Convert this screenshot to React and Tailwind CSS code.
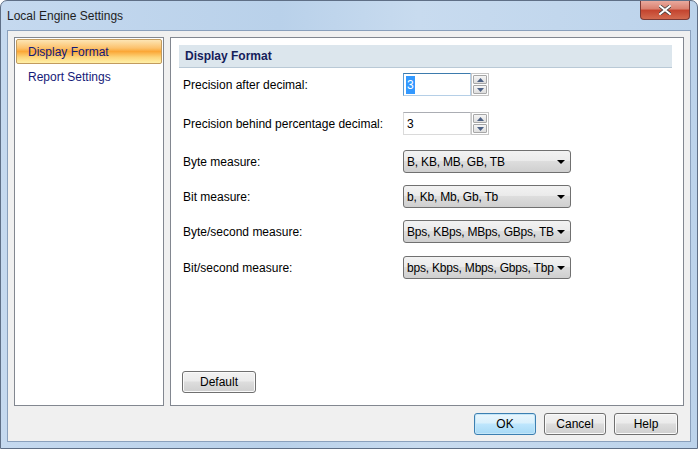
import React from "react";

const font = { fontFamily: '"Liberation Sans", Arial, sans-serif' };

function SpinBox({ value, focused }) {
  return (
    <div className="flex h-[23px] w-[86px]">
      <div
        className={`flex h-full w-[68px] items-center border bg-white pl-[2px] text-[12px] ${
          focused
            ? "border-t-[#3d7bad] border-l-[#5c9bd1] border-b-[#b5cfe7] border-r-[#b5cfe7]"
            : "border-[#dadada] border-t-[#abadb3]"
        }`}
      >
        {focused ? (
          <span className="bg-[#3399ff] px-[1px] text-white">{value}</span>
        ) : (
          <span className="px-[1px] text-black">{value}</span>
        )}
      </div>
      <div className="flex h-full w-[18px] flex-col gap-[1px] border border-[#c6c6c6] bg-white p-[1px]">
        <div className="flex flex-1 items-center justify-center rounded-[1px] border border-[#a7a7a7] bg-gradient-to-b from-[#f5f5f5] to-[#dedede]">
          <svg width="7" height="4" viewBox="0 0 7 4">
            <path d="M0 4 L3.5 0 L7 4 Z" fill="#4d6185" />
          </svg>
        </div>
        <div className="flex flex-1 items-center justify-center rounded-[1px] border border-[#a7a7a7] bg-gradient-to-b from-[#f5f5f5] to-[#dedede]">
          <svg width="7" height="4" viewBox="0 0 7 4">
            <path d="M0 0 L7 0 L3.5 4 Z" fill="#4d6185" />
          </svg>
        </div>
      </div>
    </div>
  );
}

function Dropdown({ value }) {
  return (
    <div className="relative flex h-[23px] w-[168px] items-center rounded-[3px] border border-[#707070] bg-[linear-gradient(#f2f2f2_0%,#ebebeb_45%,#dddddd_50%,#cfcfcf_100%)] pl-[3px] text-[12px] text-black">
      <span className="w-[147px] overflow-hidden whitespace-nowrap tracking-[-0.2px]">{value}</span>
      <svg className="absolute right-[5px] top-[9px]" width="8" height="4" viewBox="0 0 8 4">
        <path d="M0 0 L8 0 L4 4 Z" fill="#000" />
      </svg>
    </div>
  );
}

function Button({ children, focused, w = "w-[62px]" }) {
  return (
    <div
      className={`flex h-[22px] ${w} items-center justify-center rounded-[3px] border text-[12px] text-black ${
        focused
          ? "border-[#3c7fb1] bg-[linear-gradient(#eaf6fd_0%,#d9f0fc_45%,#bee6fd_50%,#a7d9f5_100%)] shadow-[inset_0_0_0_1px_#c4e6f8]"
          : "border-[#707070] bg-[linear-gradient(#f2f2f2_0%,#ebebeb_45%,#dddddd_50%,#cfcfcf_100%)] shadow-[inset_0_0_0_1px_#fafafa]"
      }`}
    >
      {children}
    </div>
  );
}

function Row({ label, children, className }) {
  return (
    <div className={`flex items-center ${className}`}>
      <div className="w-[224px] pl-[4px] text-[12px] text-black">{label}</div>
      {children}
    </div>
  );
}

export default function App() {
  return (
    <div style={font} className="h-[449px] w-[698px] bg-white">
      <div className="flex h-[449px] w-[698px] flex-col overflow-hidden rounded-t-[7px] border border-[#5f6f86] bg-[linear-gradient(90deg,#c5d9ef_0%,#b9d1ea_40%,#c8dbef_60%,#bcd3eb_100%)]">
        {/* title bar */}
        <div className="relative flex h-[29px] shrink-0 items-center pl-[6px] text-[12px] text-[#1e1e1e]">
          <span className="mt-[1px]">Local Engine Settings</span>
          <div className="absolute right-[7px] top-0 flex h-[19px] w-[50px] items-center justify-center rounded-b-[4px] border border-t-0 border-[#7a3a36] bg-[linear-gradient(#e9a99d_0%,#d9806f_45%,#c4432e_50%,#d26a4f_100%)]">
            <svg width="12" height="10" viewBox="0 0 12 10">
              <path d="M1 1 L11 9 M11 1 L1 9" stroke="#3c3c3c" strokeWidth="3.4" strokeLinecap="square" />
              <path d="M1 1 L11 9 M11 1 L1 9" stroke="#ffffff" strokeWidth="2" strokeLinecap="square" />
            </svg>
          </div>
        </div>
        {/* client area */}
        <div className="mx-[6px] mb-[6px] flex flex-1 flex-col border border-[#8aa0bc] bg-[#f0f0f0] px-[6px] pt-[6px]">
          <div className="flex h-[369px] gap-[6px]">
            {/* nav */}
            <div className="flex w-[150px] flex-col border border-[#828790] bg-white p-[1px]">
              <div className="flex h-[25px] items-center rounded-[2px] border border-[#c29b5e] bg-[linear-gradient(#fde5b4_0%,#fcc26d_35%,#fba737_50%,#fdd57b_75%,#fff0a8_100%)] pl-[11px] text-[12px] text-[#141a78]">
                Display Format
              </div>
              <div className="flex h-[25px] items-center pl-[12px] text-[12px] text-[#141a78]">
                Report Settings
              </div>
            </div>
            {/* content */}
            <div className="flex flex-1 flex-col border border-[#828790] bg-white pb-[12px] pl-[8px] pr-[11px] pt-[7px]">
              <div className="flex h-[23px] items-center border-b border-[#b9c9d6] bg-[#dce6ed] pl-[6px] text-[12px] font-bold text-[#15205a]">
                Display Format
              </div>
              <Row label="Precision after decimal:" className="mt-[5px]">
                <SpinBox value="3" focused />
              </Row>
              <Row label="Precision behind percentage decimal:" className="mt-[16px]">
                <SpinBox value="3" />
              </Row>
              <Row label="Byte measure:" className="mt-[15px]">
                <Dropdown value="B, KB, MB, GB, TB" />
              </Row>
              <Row label="Bit measure:" className="mt-[12px]">
                <Dropdown value="b, Kb, Mb, Gb, Tb" />
              </Row>
              <Row label="Byte/second measure:" className="mt-[12px]">
                <Dropdown value="Bps, KBps, MBps, GBps, TBps" />
              </Row>
              <Row label="Bit/second measure:" className="mt-[13px]">
                <Dropdown value="bps, Kbps, Mbps, Gbps, Tbps" />
              </Row>
              <div className="mt-auto pl-[3px]">
                <Button w="w-[74px]">Default</Button>
              </div>
            </div>
          </div>
          <div className="flex justify-end gap-[8px] pr-[6px] pt-[7px]">
            <Button focused>OK</Button>
            <Button>Cancel</Button>
            <Button w="w-[64px]">Help</Button>
          </div>
        </div>
      </div>
    </div>
  );
}
